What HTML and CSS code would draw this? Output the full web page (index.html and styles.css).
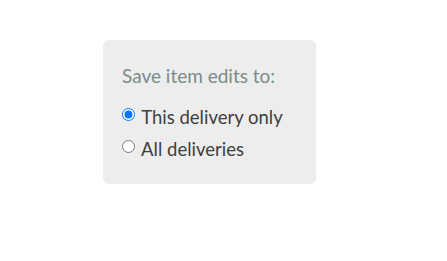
FILE: index.html
```html
<!DOCTYPE html>
<html lang="en">
<head>
    <meta charset="UTF-8">
    <meta name="viewport" content="width=device-width, initial-scale=1.0">
    <title>Save item edits</title>
    <link rel="stylesheet" href="styles.css">
</head>
<body>
    <div class="edit-scope">
        <div class="scope-title">Save item edits to:</div>
        <label class="scope-option">
            <input type="radio" name="scope" value="this" checked> This delivery only
        </label>
        <label class="scope-option">
            <input type="radio" name="scope" value="all"> All deliveries
        </label>
    </div>
</body>
</html>
```

FILE: styles.css
```css
body {
    margin: 0;
    padding: 40px 0 0 103px;
    background-color: #fff;
    font-family: 'Lato', 'Open Sans', sans-serif;
}

.edit-scope {
    width: 213px;
    height: 144px;
    box-sizing: border-box;
    padding: 22px 19px 0 19px;
    background-color: #ededed;
    border-radius: 6px;
}

.scope-title {
    font-size: 19px;
    color: #7a8b89;
    line-height: 28px;
    margin-bottom: 11px;
}

.scope-option {
    display: block;
    font-size: 18.5px;
    color: #404040;
    line-height: 32px;
}

.scope-option input {
    margin: 0 2px 0 0;
    width: 13px;
    height: 13px;
    vertical-align: 3px;
}
```
